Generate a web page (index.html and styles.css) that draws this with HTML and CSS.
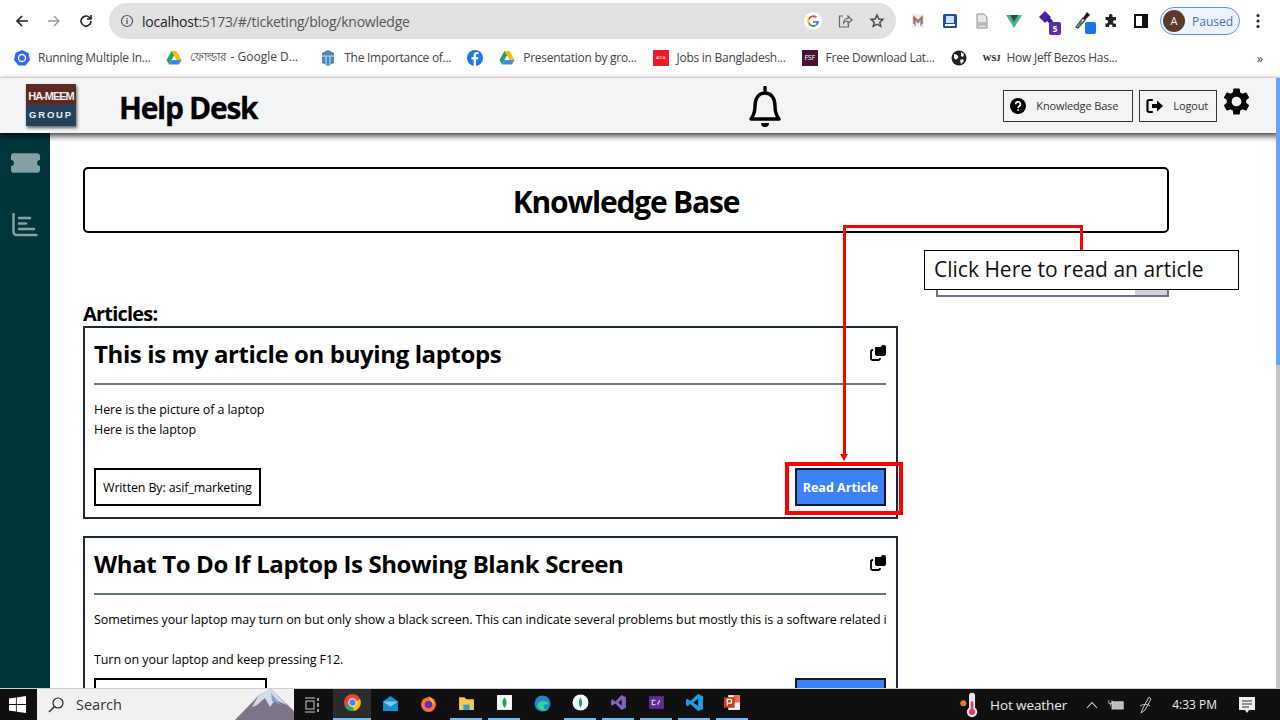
FILE: index.html
```html
<!DOCTYPE html>
<html lang="en">
<head>
    <meta charset="UTF-8">
    <title>Help Desk</title>
    <link rel="stylesheet" href="styles.css">
</head>
<body>
    <div class="toolbar">
        <svg class="nav-icon" viewBox="0 0 16 16"><path d="M14 8H3M8 3 3 8l5 5" fill="none" stroke="#222" stroke-width="1.6"/></svg>
        <svg class="nav-icon" viewBox="0 0 16 16"><path d="M2 8h11M8 3l5 5-5 5" fill="none" stroke="#999" stroke-width="1.4"/></svg>
        <svg class="nav-icon" viewBox="0 0 16 16"><path d="M13 8a5 5 0 1 1-1.500-3.500L13 6M13 2v4H9" fill="none" stroke="#222" stroke-width="1.6"/></svg>
        <div class="omnibox">
            <svg class="info-icon" viewBox="0 0 14 14"><circle cx="7" cy="7" r="5.500" fill="none" stroke="#555" stroke-width="1.2"/><path d="M7 6v4M7 4v1.200" stroke="#555" stroke-width="1.3"/></svg>
            <span class="url"><b>localhost</b>:5173/#/ticketing/blog/knowledge</span>
            <svg class="omni-icon google" viewBox="0 0 18 18"><circle cx="9" cy="9" r="9" fill="#fff"/><path d="M9 5a4 4 0 0 1 2.700 1L13 4.700A6 6 0 0 0 4 6.300L5.500 7.500A4 4 0 0 1 9 5z" fill="#ea4335"/><path d="M4 6.300a6 6 0 0 0 0 5.400l1.500-1.200a4 4 0 0 1 0-3z" fill="#fbbc05"/><path d="M4 11.700a6 6 0 0 0 9 1.900l-1.500-1.200A4 4 0 0 1 5.500 10.500z" fill="#34a853"/><path d="M15 9h-6v1.800h3.400a3 3 0 0 1-.9 1.600l1.500 1.200A6 6 0 0 0 15 9z" fill="#4285f4"/></svg>
            <svg class="omni-icon" viewBox="0 0 16 16"><path d="M6 3H2.500v11h9v-3M6.500 10c0-3 2-4.500 4.500-4.500V3l4 4-4 3.500V8c-2 0-3.500.5-4.500 2z" fill="none" stroke="#666" stroke-width="1.200"/></svg>
            <svg class="omni-icon" viewBox="0 0 16 16"><path d="m8 2 1.800 4 4.200.4-3.200 2.800 1 4.200L8 11.200 4.200 13.400l1-4.200L2 6.400 6.200 6z" fill="none" stroke="#444" stroke-width="1.400"/></svg>
        </div>
        <div class="extensions">
            <svg class="ext" viewBox="0 0 16 16"><rect x="2" y="1" width="12" height="14" rx="1" fill="#eee"/><path d="M4 11V4l4 4 4-4v7" fill="none" stroke="#d9542b" stroke-width="1.500"/><path d="M5 13V6l3 4 3-4v7" fill="none" stroke="#2980b9" stroke-width="1"/></svg>
            <svg class="ext" viewBox="0 0 16 16"><rect x="1" y="1" width="14" height="14" rx="1.500" fill="#1d4f91"/><rect x="4" y="3" width="8" height="7" fill="#cfe0f5"/><rect x="3" y="11" width="10" height="2" fill="#fff"/></svg>
            <svg class="ext" viewBox="0 0 16 16"><path d="M3 1h7l3 3v11H3z" fill="#e6e6e6" stroke="#8c8c8c"/><rect x="4" y="9" width="8" height="4" fill="#bbb"/></svg>
            <svg class="ext" viewBox="0 0 16 16"><path d="M0 2h16L8 15z" fill="#41b883"/><path d="M4 2h8L8 9z" fill="#35495e"/></svg>
            <span class="ext-wrap">
                <svg class="ext-big" viewBox="0 0 20 20"><path d="M7 1l6 6-6 6-6-6z" fill="#4b1fa8"/><path d="M10 6l5 5-3 3-5-5z" fill="#2d1fa0"/></svg>
                <span class="ext-badge">5</span>
            </span>
            <span class="ext-wrap">
                <svg class="ext-big" viewBox="0 0 20 20"><path d="M2 17l7-9 2 2-7 8z" fill="#fff" stroke="#333" stroke-width="1.200"/><path d="M9 8l4-6 3 3-5 5z" fill="#222"/><path d="M3 16l4-5 2 1-5 5z" fill="#3a9a70"/></svg>
                <span class="ext-blue"></span>
            </span>
            <svg class="ext puzzle" viewBox="0 0 16 16"><path d="M6 2.500a1.800 1.800 0 0 1 3.500 0V4H13v3.200h-1.200a1.800 1.800 0 0 0 0 3.600H13V14H9.500v-1.200a1.800 1.800 0 0 0-3.500 0V14H2.500v-3.500h1.200a1.800 1.800 0 0 0 0-3.500H2.500V4H6z" fill="#222"/></svg>
            <svg class="ext panel" viewBox="0 0 16 16"><rect x="2" y="2" width="12" height="12" fill="none" stroke="#111" stroke-width="2"/><rect x="9" y="2" width="5" height="12" fill="#111"/></svg>
        </div>
        <div class="profile"><span class="avatar">A</span><span>Paused</span></div>
        <svg class="menu-dots" viewBox="0 0 4 16"><circle cx="2" cy="2.500" r="1.500"/><circle cx="2" cy="8" r="1.500"/><circle cx="2" cy="13.500" r="1.500"/></svg>
    </div>

    <div class="bookmarks">
        <span class="bookmark"><svg viewBox="0 0 16 16"><path d="M8 0l6.500 3 1.500 7-4.500 5.500h-7L0 10l1.500-7z" fill="#326ce5"/><circle cx="8" cy="8" r="3.500" fill="none" stroke="#fff" stroke-width="1.300"/></svg>Running Multiple In...</span>
        <span class="bookmark bm-bengali"><svg viewBox="0 0 16 16"><path d="M5.500 1h5l5 9h-5z" fill="#fbbc04"/><path d="M5.500 1 .5 10 3 14.500 8 5.500z" fill="#1fa463"/><path d="M3 14.500h10l2.500-4.500h-10z" fill="#4285f4"/></svg>ফোল্ডার - Google D...</span>
        <span class="bookmark"><svg viewBox="0 0 16 16"><path d="M8 0l6 3v10l-6 3-6-3V3z" fill="#4a86b8"/><path d="M2 6h12M6 6v9M10 6v9" stroke="#cfe3f2" stroke-width="1"/></svg>The Importance of...</span>
        <span class="bookmark"><svg viewBox="0 0 16 16"><circle cx="8" cy="8" r="8" fill="#1877f2"/><path d="M9 16V9.500h2l.4-2.500H9V5.600c0-.8.300-1.300 1.300-1.300h1.200V2.100C11 2 10.400 2 9.800 2 8 2 6.600 3.100 6.600 5.200V7H4.500v2.500h2.100V16z" fill="#fff"/></svg></span>
        <span class="bookmark"><svg viewBox="0 0 16 16"><path d="M5.500 1h5l5 9h-5z" fill="#fbbc04"/><path d="M5.500 1 .5 10 3 14.500 8 5.500z" fill="#1fa463"/><path d="M3 14.500h10l2.500-4.500h-10z" fill="#4285f4"/></svg>Presentation by gro...</span>
        <span class="bookmark"><span class="favicon-acca">ACCA</span>Jobs in Bangladesh...</span>
        <span class="bookmark"><span class="favicon-fsf">FSF</span>Free Download Lat...</span>
        <span class="bookmark"><svg viewBox="0 0 16 16"><circle cx="8" cy="8" r="7.500" fill="#222"/><path d="M3 4c2 0 3 1 4 2s0 2-1 3-2 0-3-1zM10 2l3 2-1 3-2-1zM9 10l3-1 1 2-3 3z" fill="#fff"/></svg></span>
        <span class="bookmark"><span class="favicon-wsj">WSJ</span>How Jeff Bezos Has...</span>
        <span class="bm-more">»</span>
    </div>

    <header class="app-header">
        <div class="logo">
            <div class="logo-top">HA-MEEM</div>
            <div class="logo-bottom">GROUP</div>
        </div>
        <div class="app-title">Help Desk</div>
        <svg class="bell" viewBox="0 0 36 42"><path d="M18 1.500v3M4 33c2-3 4-5 4-13 0-8 4-13 10-13s10 5 10 13c0 8 2 10 4 13z" fill="none" stroke="#000" stroke-width="3.400" stroke-linejoin="round" stroke-linecap="round"/><path d="M14 37h8a4 4 0 0 1-8 0z" fill="#000"/></svg>
        <button class="head-btn kb-btn">
            <svg viewBox="0 0 16 16"><circle cx="8" cy="8" r="8" fill="#000"/><path d="M5.600 6.200A2.400 2.400 0 1 1 9 8.400c-.7.400-1 .7-1 1.500M8 11.300v1.500" fill="none" stroke="#fff" stroke-width="1.600"/></svg>
            Knowledge Base
        </button>
        <button class="head-btn logout-btn">
            <svg viewBox="0 0 18 16"><path d="M6 2H3a1.500 1.500 0 0 0-1.500 1.500v9A1.500 1.500 0 0 0 3 14h3" fill="none" stroke="#000" stroke-width="2.200" stroke-linecap="round"/><path d="M6 6h5V2.500L17 8l-6 5.500V10H6z" fill="#000"/></svg>
            Logout
        </button>
        <svg class="gear" viewBox="2 2 20 20"><path d="M19.140 12.940c.04-.3.06-.61.06-.94 0-.32-.02-.64-.07-.94l2.030-1.580c.18-.14.23-.41.12-.61l-1.920-3.320c-.12-.22-.37-.29-.59-.22l-2.390.96c-.5-.38-1.030-.7-1.620-.94l-.36-2.540c-.04-.24-.24-.41-.48-.41h-3.840c-.24 0-.43.17-.47.41l-.36 2.540c-.59.24-1.130.57-1.620.94l-2.390-.96c-.22-.08-.47 0-.59.22L2.740 8.870c-.12.21-.08.47.12.61l2.030 1.580c-.05.3-.09.63-.09.94s.02.64.07.94l-2.030 1.580c-.18.14-.23.41-.12.61l1.920 3.320c.12.22.37.29.59.22l2.390-.96c.5.38 1.030.7 1.620.94l.36 2.540c.05.24.24.41.48.41h3.840c.24 0 .44-.17.47-.41l.36-2.540c.59-.24 1.130-.56 1.620-.94l2.390.96c.22.08.47 0 .59-.22l1.920-3.320c.12-.22.07-.47-.12-.61l-2.010-1.580zM12 15.600c-1.980 0-3.600-1.620-3.600-3.600s1.620-3.600 3.600-3.600 3.600 1.620 3.600 3.600-1.620 3.600-3.600 3.600z"/></svg>
    </header>

    <div class="app-body">
        <nav class="sidebar">
            <svg class="side-icon" viewBox="0 0 30 20"><path d="M3 0h24a3 3 0 0 1 3 3v4a3 3 0 0 0 0 6v4a3 3 0 0 1-3 3H3a3 3 0 0 1-3-3v-4a3 3 0 0 0 0-6V3a3 3 0 0 1 3-3z" fill="#84a0a3"/></svg>
            <svg class="side-icon chart" viewBox="0 0 26 24"><path d="M1.500 1v18a3 3 0 0 0 3 3h20" fill="none" stroke="#84a0a3" stroke-width="2.500" stroke-linecap="round"/><path d="M7 5h11M7 10.500h7M7 16h15" stroke="#84a0a3" stroke-width="2.500" stroke-linecap="round"/></svg>
        </nav>

        <main class="content">
            <h1 class="page-title">Knowledge Base</h1>
            <div class="content-row">
                <section class="articles">
                    <h2 class="articles-label">Articles:</h2>

                    <article class="card">
                        <div class="card-head">
                            <h3>This is my article on buying laptops</h3>
                            <svg class="copy-icon" viewBox="0 0 16 16"><path d="M5 3h6a2 2 0 0 1 2-2h1a2 2 0 0 1 2 2v7a2 2 0 0 1-2 2H7a2 2 0 0 1-2-2z" transform="translate(0 -1)"/><path d="M3 5H2.500A1.500 1.500 0 0 0 1 6.500v7A1.500 1.500 0 0 0 2.500 15h6a1.500 1.500 0 0 0 1.500-1.500V13" fill="none" stroke="#000" stroke-width="1.800"/></svg>
                        </div>
                        <div class="card-text">
                            <p>Here is the picture of a laptop</p>
                            <p>Here is the laptop</p>
                        </div>
                        <div class="card-foot">
                            <span class="author">Written By: asif_marketing</span>
                            <button class="read-btn">Read Article</button>
                        </div>
                    </article>

                    <article class="card">
                        <div class="card-head">
                            <h3>What To Do If Laptop Is Showing Blank Screen</h3>
                            <svg class="copy-icon" viewBox="0 0 16 16"><path d="M5 3h6a2 2 0 0 1 2-2h1a2 2 0 0 1 2 2v7a2 2 0 0 1-2 2H7a2 2 0 0 1-2-2z" transform="translate(0 -1)"/><path d="M3 5H2.500A1.500 1.500 0 0 0 1 6.500v7A1.500 1.500 0 0 0 2.500 15h6a1.500 1.500 0 0 0 1.500-1.500V13" fill="none" stroke="#000" stroke-width="1.800"/></svg>
                        </div>
                        <div class="card-text">
                            <p>Sometimes your laptop may turn on but only show a black screen. This can indicate several problems but mostly this is a software related issue.</p>
                            <p class="spaced">Turn on your laptop and keep pressing F12.</p>
                        </div>
                        <div class="card-foot">
                            <span class="author author-wide">Written By: asif_marketing</span>
                            <button class="read-btn">Read Article</button>
                        </div>
                    </article>
                </section>
                <aside class="search-box"><span class="search-btn"></span></aside>
            </div>
        </main>

        <!-- annotation drawn over the page -->
        <div class="arrow-top"></div>
        <div class="arrow-drop"></div>
        <div class="arrow-stem"></div>
        <div class="arrow-head"></div>
        <div class="highlight"></div>
        <div class="callout">Click Here to read an article</div>
    </div>

    <div class="scrollbar"></div>

    <footer class="taskbar">
        <svg class="win-logo" viewBox="0 0 16 16"><path d="M0 2.300 6.500 1.400v6.200H0zM7.300 1.300 16 0v7.600H7.300zM0 8.400h6.500v6.200L0 13.700zM7.300 8.400H16V16l-8.700-1.200z" fill="#fff"/></svg>
        <div class="task-search">
            <svg viewBox="0 0 16 16"><circle cx="10" cy="6" r="5" fill="none" stroke="#222" stroke-width="1.200"/><path d="M6.300 9.700 1 15" stroke="#222" stroke-width="1.300"/></svg>
            <span>Search</span>
            <svg class="mountain" viewBox="0 0 59 31"><path d="M0 31 24 6l12-6 23 22v9z" fill="#7d7488"/><path d="M24 6l12-6 16 16-12-5-5 7-5-9-8 7-5 2z" fill="#d5dbe8"/><path d="M36 4l10 12-9-4z" fill="#7fa3c9"/></svg>
        </div>
        <svg class="task-view" viewBox="0 0 16 16"><path d="M1 1h10M1 15h10" stroke="#ccc" stroke-width="1.200"/><rect x="2" y="4" width="8" height="8" fill="none" stroke="#ccc"/><path d="M14 1v3M14 6v4M14 12v3" stroke="#ccc" stroke-width="1.500"/></svg>
        <div class="task-apps">
            <span class="task-app active">
                <svg viewBox="0 0 16 16"><circle cx="8" cy="8" r="8" fill="#ea4335"/><path d="M8 8 1 12a8 8 0 0 0 8 4z" fill="#34a853"/><path d="M8 8l7-3a8 8 0 0 1-6 11z" fill="#fbbc05"/><circle cx="8" cy="8" r="3.500" fill="#4285f4" stroke="#fff"/></svg>
            </span>
            <span class="task-app"><svg viewBox="0 0 16 16"><path d="M1 6l7-5 7 5v9H1z" fill="#1490df"/><path d="M1 6l7 5 7-5" fill="#7fd0f7"/></svg></span>
            <span class="task-app"><svg viewBox="0 0 16 16"><circle cx="8" cy="9" r="7" fill="#ff7139"/><path d="M8 1c3 2 5 4 5 8l-3-3z" fill="#ffbd2e"/><circle cx="8" cy="9" r="3.500" fill="#6b2fb3"/></svg></span>
            <span class="task-app on"><svg viewBox="0 0 16 16"><path d="M1 3h5l2 2h7v10H1z" fill="#f7c948"/><rect x="5" y="10" width="6" height="5" fill="#2f9be0"/></svg></span>
            <span class="task-app on"><svg viewBox="0 0 16 16"><rect x="1" y="1" width="14" height="14" fill="#fff"/><path d="M8 3c2.500 3 2.500 7 0 10-2.500-3-2.500-7 0-10z" fill="#13aa52"/></svg></span>
            <span class="task-app"><svg viewBox="0 0 16 16"><circle cx="8" cy="8" r="7.500" fill="#1e88c9"/><path d="M3 10c1-5 9-6 11-1-3-1-5 0-5 2s3 3 5 2c-3 3-9 2-11-3z" fill="#3ecf8e"/></svg></span>
            <span class="task-app on"><svg viewBox="0 0 16 16"><circle cx="8" cy="8" r="7.500" fill="#fff"/><path d="M8 3c2 3 2 7 0 10-2-3-2-7 0-10z" fill="#13aa52"/></svg></span>
            <span class="task-app on"><svg viewBox="0 0 16 16"><path d="M11 1l4 2v10l-4 2-6-6-3 2-1-1V6l1-1 3 2zM11 5 8 8l3 3z" fill="#8661c5"/></svg></span>
            <span class="task-app on"><svg viewBox="0 0 16 16"><rect x="1" y="2" width="14" height="12" fill="#5c2d91"/><path d="M7 6H4v4h3M11 6l-2 4" fill="none" stroke="#ccc" stroke-width="1.200"/></svg></span>
            <span class="task-app on"><svg viewBox="0 0 16 16"><path d="M11.500 0 16 2v12l-4.500 2L4 9.500 1.500 11.500 0 10.500v-5L1.500 4.500 4 6.500zM11.500 4.500 7 8l4.500 3.500z" fill="#1e9ce8"/></svg></span>
            <span class="task-app on"><svg viewBox="0 0 16 16"><path d="M4 1h11v14H4z" fill="#f3f3f3"/><path d="M9 1h6v7H9z" fill="#ed6c47"/><rect x="0" y="3" width="10" height="10" fill="#c43e1c"/><path d="M3 11V5h2.500a1.700 1.700 0 0 1 0 3.600H4" fill="none" stroke="#fff" stroke-width="1.200"/></svg></span>
        </div>
        <div class="tray">
            <svg class="thermo" viewBox="0 0 22 30"><circle cx="4.500" cy="13" r="3.500" fill="#e8792b"/><rect x="11" y="1" width="7" height="21" rx="3.500" fill="#dfe8f2"/><circle cx="14.500" cy="23" r="6" fill="#dfe8f2"/><rect x="13" y="11" width="3" height="12" fill="#e5395c"/><circle cx="14.500" cy="23" r="3.500" fill="#e5395c"/></svg>
            <span class="weather">Hot weather</span>
            <svg class="chevron" viewBox="0 0 12 8"><path d="M1 7l5-5.500L11 7" fill="none" stroke="#ddd" stroke-width="1.100"/></svg>
            <svg class="battery" viewBox="0 0 20 14"><rect x="5" y="3" width="14" height="9" fill="#bbb" stroke="#ddd"/><path d="M1 1v4h4V1M3 5v3" fill="none" stroke="#ddd"/></svg>
            <svg class="pen" viewBox="0 0 14 18"><path d="M10 1 4 12l-2 5 4-3 6-11zM1 10c3-2 8-2 10 0" fill="none" stroke="#ccc" stroke-width="1"/></svg>
            <span class="clock">4:33 PM</span>
            <svg class="notify" viewBox="0 0 18 18"><path d="M1 1h16v13h-6l-2 3-2-3H1z" fill="#eee"/><path d="M4 5h10M4 8h10M4 11h7" stroke="#333"/></svg>
        </div>
    </footer>
</body>
</html>
```

FILE: styles.css
```css
html, body {
    height: 100%;
}
body {
    margin: 0;
    width: 1280px;
    height: 720px;
    overflow: hidden;
    display: flex;
    flex-direction: column;
    position: relative;
    background: #fff;
    color: #000;
    font-family: "Open Sans", "Noto Sans", sans-serif;
}
h1, h2, h3, p {
    margin: 0;
}
svg {
    display: block;
    flex-shrink: 0;
}

/* browser chrome */
.toolbar {
    height: 42px;
    display: flex;
    align-items: center;
    padding-left: 14px;
    flex-shrink: 0;
}
.nav-icon {
    width: 16px;
    height: 16px;
    margin-right: 16px;
}
.omnibox {
    width: 787px;
    height: 36px;
    margin-left: -1px;
    background: #e1e1e1;
    border-radius: 18px;
    display: flex;
    align-items: center;
    padding: 0 11px 0 10px;
    box-sizing: border-box;
}
.info-icon {
    width: 14px;
    height: 14px;
    margin-left: 1px;
}
.url {
    margin-left: 8px;
    font-size: 14px;
    color: #555;
    letter-spacing: -0.25px;
    flex: 1;
}
.url b {
    font-weight: 400;
    color: #222;
}
.omni-icon {
    width: 16px;
    height: 16px;
    margin-left: 16px;
}
.omni-icon.google {
    width: 18px;
    height: 18px;
    margin-right: -1px;
}
.extensions {
    display: flex;
    align-items: center;
    gap: 16px;
    margin-left: 14px;
}
.ext {
    width: 16px;
    height: 16px;
}
.ext.puzzle {
    margin-left: -7px;
}
.ext.panel {
    margin-left: -2px;
}
.ext-wrap {
    position: relative;
    width: 20px;
    height: 22px;
    display: block;
}
.ext-big {
    width: 20px;
    height: 20px;
}
.ext-badge {
    position: absolute;
    right: -3px;
    bottom: -3px;
    width: 12px;
    height: 13px;
    background: #5b2db0;
    color: #fff;
    font-size: 8px;
    font-weight: 700;
    line-height: 13px;
    text-align: center;
    border-radius: 2px;
}
.ext-blue {
    position: absolute;
    right: -2px;
    bottom: -2px;
    width: 11px;
    height: 12px;
    background: #1a73e8;
    border-radius: 2px;
}
.profile {
    margin-left: 11px;
    width: 80px;
    height: 28px;
    box-sizing: border-box;
    border: 1.500px solid #5b93de;
    border-radius: 14px;
    background: #edf3fc;
    display: flex;
    align-items: center;
    gap: 7px;
    padding-left: 2px;
    font-size: 12px;
    color: #3f6fb5;
}
.avatar {
    width: 22px;
    height: 22px;
    border-radius: 50%;
    background: #5a3a2c;
    color: #eee;
    font-size: 11px;
    line-height: 22px;
    text-align: center;
}
.menu-dots {
    width: 4px;
    height: 16px;
    margin-left: 16px;
    fill: #222;
}

.bookmarks {
    height: 35px;
    box-sizing: border-box;
    padding: 0 0 4px 14px;
    display: flex;
    align-items: center;
    gap: 16px;
    font-size: 12px;
    letter-spacing: -0.27px;
    color: #444;
    flex-shrink: 0;
}
.bookmark {
    display: flex;
    align-items: center;
    gap: 8px;
    white-space: nowrap;
}
.bookmark svg {
    width: 16px;
    height: 16px;
}
.bm-bengali {
    letter-spacing: 0;
    margin-right: 6px;
}
.favicon-acca {
    width: 16px;
    height: 16px;
    background: #ed1c24;
    color: #fff;
    font-size: 4px;
    line-height: 16px;
    text-align: center;
}
.favicon-fsf {
    width: 16px;
    height: 16px;
    background: #4a1038;
    color: #fff;
    font-size: 7px;
    line-height: 16px;
    text-align: center;
}
.favicon-wsj {
    width: 16px;
    color: #222;
    font-family: "Liberation Serif", serif;
    font-size: 9px;
    font-weight: 700;
}
.bm-more {
    margin-left: auto;
    margin-right: 17px;
    font-size: 13px;
}

/* app header */
.app-header {
    height: 55px;
    flex-shrink: 0;
    display: flex;
    align-items: center;
    background: #f3f4f6;
    border-top: 1px solid #cfcfcf;
    box-shadow: 0 3px 6px rgba(0, 0, 0, 0.75);
    position: relative;
    z-index: 2;
}
.logo {
    width: 50px;
    height: 42px;
    margin-left: 26px;
    margin-top: -2px;
    display: flex;
    flex-direction: column;
    box-shadow: 1px 2px 3px rgba(0, 0, 0, 0.6);
    text-align: center;
    color: #eee;
    font-weight: 700;
    font-family: "Liberation Sans", sans-serif;
}
.logo-top {
    height: 21px;
    background: #5c2a22;
    font-size: 11px;
    line-height: 24px;
    white-space: nowrap;
    letter-spacing: -1px;
}
.logo-bottom {
    flex: 1;
    background: #23425c;
    font-size: 9.500px;
    line-height: 20px;
    letter-spacing: 1.800px;
}
.app-title {
    margin-left: 43px;
    margin-top: 4px;
    font-size: 30px;
    font-weight: 700;
    letter-spacing: -1.300px;
    -webkit-text-stroke: 0.300px #000;
}
.bell {
    width: 36px;
    height: 42px;
    margin-left: 490px;
    margin-top: 3px;
}
.head-btn {
    display: flex;
    align-items: center;
    height: 32px;
    box-sizing: border-box;
    background: #f3f4f6;
    border: 1px solid #333;
    font-family: "Open Sans", "Noto Sans", sans-serif;
    font-size: 11px;
    letter-spacing: -0.15px;
    color: #333;
    padding: 0;
}
.head-btn svg {
    width: 16px;
    height: 16px;
}
.kb-btn {
    width: 130px;
    margin-left: 220px;
    padding-left: 6px;
    gap: 10px;
}
.logout-btn {
    width: 78px;
    margin-left: 6px;
    padding-left: 6px;
    gap: 9px;
}
.logout-btn svg {
    width: 18px;
}
.gear {
    width: 27px;
    height: 27px;
    margin-left: 6px;
    margin-top: -9px;
}

/* page body */
.app-body {
    flex: 1;
    min-height: 0;
    display: flex;
    position: relative;
    overflow: hidden;
}
.sidebar {
    width: 50px;
    flex-shrink: 0;
    background: #00363b;
    display: flex;
    flex-direction: column;
    align-items: center;
    padding-top: 20px;
    gap: 40px;
    box-sizing: border-box;
}
.side-icon {
    width: 29px;
    height: 20px;
}
.side-icon.chart {
    width: 26px;
    height: 24px;
}
.content {
    flex: 1;
    padding: 34px 0 0 33px;
    min-width: 0;
}
.page-title {
    width: 1086px;
    height: 66px;
    box-sizing: border-box;
    border: 2px solid #000;
    border-radius: 5px;
    font-size: 30px;
    font-weight: 700;
    line-height: 66px;
    text-align: center;
    letter-spacing: -1.200px;
    white-space: nowrap;
}
.content-row {
    display: flex;
    align-items: flex-start;
    gap: 38px;
    margin-top: 68px;
}
.articles {
    width: 815px;
    flex-shrink: 0;
}
.articles-label {
    font-size: 20px;
    font-weight: 700;
    line-height: 25px;
    letter-spacing: -0.800px;
}
.card {
    box-sizing: border-box;
    border: 2px solid #1f2937;
    padding: 0 10px 0 9px;
    height: 193px;
    margin-bottom: 17px;
    display: flex;
    flex-direction: column;
}
.card-head {
    height: 50px;
    padding-bottom: 5px;
    display: flex;
    align-items: center;
    justify-content: space-between;
    border-bottom: 2px solid #6b7280;
}
.card-head h3 {
    font-size: 24px;
    font-weight: 700;
    letter-spacing: -0.380px;
    white-space: nowrap;
}
.copy-icon {
    width: 16px;
    height: 16px;
}
.card-text {
    font-size: 12.500px;
    letter-spacing: -0.090px;
    line-height: 20px;
    margin-top: 15px;
    height: 60px;
    overflow: hidden;
    white-space: nowrap;
}
.spaced {
    margin-top: 20px;
}
.card-foot {
    display: flex;
    align-items: center;
    justify-content: space-between;
    margin-top: 8px;
}
.author {
    height: 38px;
    box-sizing: border-box;
    border: 2px solid #000;
    padding: 0 7px;
    font-size: 12.500px;
    letter-spacing: -0.150px;
    line-height: 36px;
}
.author-wide {
    width: 173px;
}
.read-btn {
    width: 91px;
    height: 38px;
    box-sizing: border-box;
    background: #3b82f6;
    border: 2px solid #111827;
    color: #fff;
    font-family: "Open Sans", "Noto Sans", sans-serif;
    font-size: 12.500px;
    font-weight: 700;
    padding: 0;
}
.search-box {
    width: 233px;
    height: 40px;
    margin-top: -44px;
    box-sizing: border-box;
    border: 2px solid #6b7280;
    display: flex;
    justify-content: flex-end;
}
.search-btn {
    width: 32px;
    background: #d1d5db;
}

/* annotation */
.arrow-top {
    position: absolute;
    left: 844px;
    top: 92px;
    width: 239px;
    height: 3px;
    background: #f00;
}
.arrow-drop {
    position: absolute;
    left: 1080px;
    top: 92px;
    width: 3px;
    height: 26px;
    background: #f00;
}
.arrow-stem {
    position: absolute;
    left: 843px;
    top: 92px;
    width: 3px;
    height: 230px;
    background: #f00;
}
.arrow-head {
    position: absolute;
    left: 840px;
    top: 321px;
    width: 0;
    height: 0;
    border-left: 4.500px solid transparent;
    border-right: 4.500px solid transparent;
    border-top: 7px solid #f00;
}
.highlight {
    position: absolute;
    left: 785px;
    top: 329px;
    width: 118px;
    height: 53px;
    box-sizing: border-box;
    border: 4px solid #f00;
}
.callout {
    position: absolute;
    left: 924px;
    top: 117px;
    width: 315px;
    height: 40px;
    box-sizing: border-box;
    background: #fff;
    border: 1px solid #000;
    padding-left: 9px;
    font-size: 21px;
    line-height: 37px;
    color: #111;
    white-space: nowrap;
}
.scrollbar {
    position: absolute;
    right: 0;
    top: 78px;
    width: 4px;
    height: 610px;
    z-index: 4;
    background: linear-gradient(#66a3ff 287px, #c4c4c4 287px);
}

/* windows taskbar */
.taskbar {
    height: 32px;
    flex-shrink: 0;
    background: #101010;
    border-top: 1px solid #cfcfcf;
    display: flex;
    align-items: center;
    box-sizing: border-box;
    position: relative;
    z-index: 3;
}
.win-logo {
    width: 17px;
    height: 17px;
    margin-left: 9px;
}
.task-search {
    width: 257px;
    height: 31px;
    margin-left: 11px;
    background: #f1f1f1;
    display: flex;
    align-items: center;
    font-size: 14.500px;
    color: #333;
    position: relative;
    overflow: hidden;
    box-sizing: border-box;
    padding-left: 11px;
}
.task-search > svg:first-child {
    width: 16px;
    height: 16px;
}
.task-search span {
    margin-left: 12px;
}
.mountain {
    position: absolute;
    right: 0;
    bottom: 0;
    width: 59px;
    height: 31px;
}
.task-view {
    width: 16px;
    height: 16px;
    margin-left: 10px;
}
.task-apps {
    display: flex;
    margin-left: 13px;
    height: 31px;
}
.task-app {
    width: 38px;
    height: 31px;
    display: flex;
    align-items: center;
    justify-content: center;
    box-sizing: border-box;
    padding-bottom: 2px;
}
.task-app svg {
    width: 17px;
    height: 17px;
}
.task-app.active {
    background: #2c2c2c;
    border-bottom: 2px solid #76b9ed;
}
.task-app.on {
    border-bottom: 2px solid #76b9ed;
    border-image: linear-gradient(to right, transparent 4px, #76b9ed 4px, #76b9ed 34px, transparent 34px) 1;
}
.tray {
    margin-left: auto;
    display: flex;
    align-items: center;
    color: #eee;
    font-size: 14px;
}
.thermo {
    width: 20px;
    height: 26px;
}
.weather {
    margin-left: 11px;
    font-size: 13.500px;
    letter-spacing: -0.100px;
}
.chevron {
    width: 12px;
    height: 8px;
    margin-left: 19px;
}
.battery {
    width: 16px;
    height: 14px;
    margin-left: 10px;
}
.pen {
    width: 14px;
    height: 18px;
    margin-left: 15px;
}
.clock {
    margin-left: 19px;
    font-size: 12px;
}
.notify {
    width: 18px;
    height: 18px;
    margin-left: 21px;
    margin-right: 24px;
}
```
